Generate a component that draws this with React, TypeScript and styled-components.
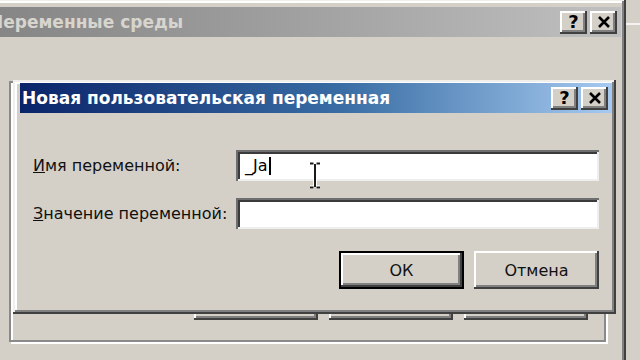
import React from 'react'
import styled, { createGlobalStyle } from 'styled-components'

const GlobalStyle = createGlobalStyle`
  html, body {
    margin: 0;
    padding: 0;
    background: #d4d0c8;
  }
  body {
    font-family: "DejaVu Sans", "Liberation Sans", sans-serif;
  }
`

const raised = `
  box-shadow:
    inset -2px -2px 0 #404040,
    inset 2px 2px 0 #ffffff,
    inset -4px -4px 0 #808080;
`

const App: React.FC = () => {
  return (
    <Desktop>
      <GlobalStyle />
      <BackWindow />
      <Window $x={-17} $y={-1} $w={643} $h={380} $pad="8px 5px 4px 8px">
        <TitleBar $active={false}>
          <Caption $shift={-4}>Переменные среды</Caption>
          <TitleButtons />
        </TitleBar>
        <GroupBox>
          <OuterButton>Создать...</OuterButton>
          <OuterButton>Изменить...</OuterButton>
          <OuterButton>Удалить</OuterButton>
        </GroupBox>
      </Window>

      <Window $x={13} $y={80} $w={603} $h={234} $pad="3px 4px 4px 7px">
        <TitleBar $active>
          <Caption>Новая пользовательская переменная</Caption>
          <TitleButtons />
        </TitleBar>
        <DialogBody>
          <Form>
            <Label>
              <u>И</u>мя переменной:
            </Label>
            <Field>
              _Ja<Caret />
            </Field>
            <Label>
              <u>З</u>начение переменной:
            </Label>
            <Field />
          </Form>
          <Actions>
            <PushButton $default>ОК</PushButton>
            <PushButton>Отмена</PushButton>
          </Actions>
        </DialogBody>
      </Window>

      <IBeam width="12" height="27" viewBox="0 0 12 27">
        <path d="M1 1.5h3.5M7.5 1.5H11M6 2v23M1 25.5h3.5M7.5 25.5H11" stroke="#fff" strokeWidth="4" fill="none" />
        <path d="M1 1.5h3.5M7.5 1.5H11M6 2v23M1 25.5h3.5M7.5 25.5H11" stroke="#1a1a1a" strokeWidth="2" fill="none" />
      </IBeam>
    </Desktop>
  )
}

const TitleButtons: React.FC = () => (
  <Controls>
    <CtlButton>
      <Help>?</Help>
    </CtlButton>
    <CtlButton>
      <svg width="14" height="12" viewBox="0 0 14 12">
        <path d="M2 1l10 10M12 1L2 11" stroke="#000" strokeWidth="2.6" fill="none" />
      </svg>
    </CtlButton>
  </Controls>
)

export default App

const Desktop = styled.div`
  position: relative;
  width: 640px;
  height: 360px;
  overflow: hidden;
  background: #d4d0c8;
`

const BackWindow = styled.div`
  position: absolute;
  left: 626px;
  top: 23px;
  width: 40px;
  height: 400px;
  border-top: 2px solid #f4f3f0;
  background: #d4d0c8;
`

const Window = styled.div<{ $x: number; $y: number; $w: number; $h: number; $pad: string }>`
  position: absolute;
  left: ${(p) => p.$x}px;
  top: ${(p) => p.$y}px;
  width: ${(p) => p.$w}px;
  height: ${(p) => p.$h}px;
  box-sizing: border-box;
  padding: ${(p) => p.$pad};
  display: flex;
  flex-direction: column;
  background: #d4d0c8;
  box-shadow:
    inset -2px -2px 0 #404040,
    inset 2px 2px 0 #f0efec,
    inset -4px -4px 0 #808080,
    inset 4px 4px 0 #ffffff;
`

const TitleBar = styled.div<{ $active: boolean }>`
  height: 30px;
  flex-shrink: 0;
  display: flex;
  align-items: center;
  justify-content: space-between;
  padding: 0 4px 0 2px;
  background: ${(p) =>
    p.$active
      ? 'linear-gradient(to right, #0a246a 0%, #3a6ea5 55%, #a6caf0 100%)'
      : 'linear-gradient(to right, #858585 0%, #a4a4a4 55%, #c0c0c0 100%)'};
  color: ${(p) => (p.$active ? '#ffffff' : '#d8d5cf')};
`

const Caption = styled.span<{ $shift?: number }>`
  margin-left: ${(p) => p.$shift ?? 0}px;
  font-weight: bold;
  font-size: 17px;
  white-space: nowrap;
`

const Controls = styled.div`
  display: flex;
  gap: 3px;
`

const CtlButton = styled.div`
  width: 27px;
  height: 23px;
  box-sizing: border-box;
  display: flex;
  align-items: center;
  justify-content: center;
  background: #d4d0c8;
  ${raised}
`

const Help = styled.span`
  font-weight: bold;
  font-size: 18px;
  color: #000;
  line-height: 1;
`

const GroupBox = styled.div`
  margin: 44px 15px 0 18px;
  height: 261px;
  box-sizing: border-box;
  flex-shrink: 0;
  display: flex;
  justify-content: flex-end;
  align-items: flex-end;
  gap: 11px;
  padding: 0 16px 20px 0;
  border: 2px solid #8a8a8a;
  box-shadow:
    inset 2px 2px 0 #ffffff,
    2px 2px 0 #ffffff;
`

const OuterButton = styled.div`
  width: 124px;
  height: 36px;
  box-sizing: border-box;
  display: flex;
  align-items: center;
  justify-content: center;
  font-size: 16px;
  color: #000;
  background: #d4d0c8;
  ${raised}
`

const DialogBody = styled.div`
  padding: 37px 13px 0 13px;
`

const Form = styled.div`
  display: grid;
  grid-template-columns: 203px 1fr;
  row-gap: 17px;
  align-items: center;
`

const Label = styled.div`
  font-size: 16px;
  color: #111;
  white-space: nowrap;
`

const Field = styled.div`
  height: 31px;
  box-sizing: border-box;
  display: flex;
  align-items: center;
  padding-left: 9px;
  background: #ffffff;
  font-size: 16px;
  color: #000;
  box-shadow:
    inset 2px 2px 0 #6e6e6e,
    inset -2px -2px 0 #eeeeee,
    inset 4px 4px 0 #3a3a3a;
`

const Caret = styled.span`
  display: inline-block;
  width: 2px;
  height: 18px;
  margin-left: 1px;
  background: #000;
`

const Actions = styled.div`
  display: flex;
  justify-content: flex-end;
  gap: 10px;
  margin-top: 22px;
`

const PushButton = styled.div<{ $default?: boolean }>`
  width: 125px;
  height: 38px;
  box-sizing: border-box;
  display: flex;
  align-items: center;
  justify-content: center;
  font-size: 16px;
  color: #111;
  background: #d4d0c8;
  border: ${(p) => (p.$default ? '2px solid #000' : '0')};
  ${raised}
`

const IBeam = styled.svg`
  position: absolute;
  left: 309px;
  top: 162px;
`
